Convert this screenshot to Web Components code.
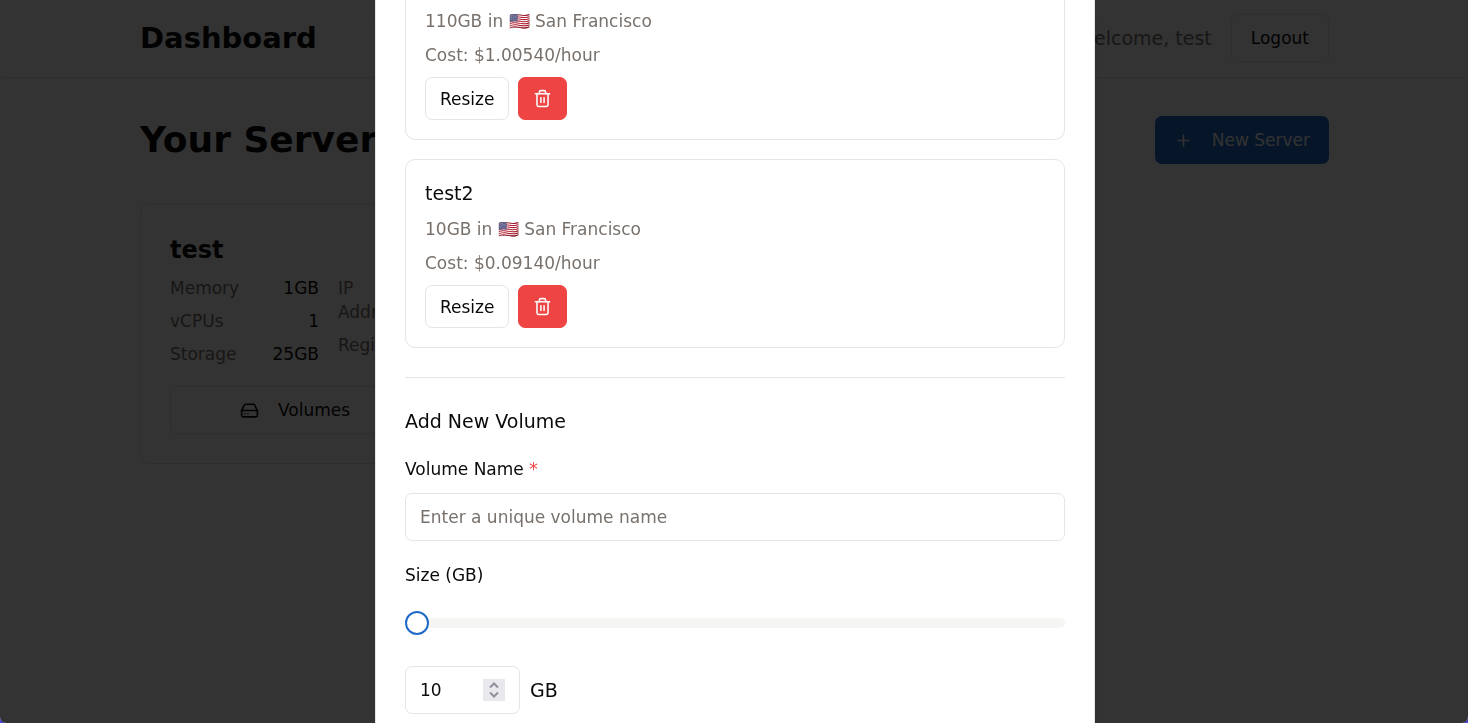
<!DOCTYPE html>
<html lang="en">
<head>
<meta charset="utf-8">
<meta name="viewport" content="width=device-width, initial-scale=1">
<title>Dashboard</title>
<style>
  html { height: 100%; background: #4a3fd0; }
  body {
    --ink: #0a0a0a; --muted: #78716c; --line: #e5e5e5; --primary: #1f6ac7; --danger: #ef4444;
    margin: 0; height: 100%; overflow: hidden;
    font: 17px/24px "DejaVu Sans", sans-serif; color: var(--ink);
  }
</style>
</head>
<body>
<dashboard-app></dashboard-app>

<script>
const define = (name, html, setup) => {
  const template = document.createElement('template');
  template.innerHTML = '<style>*{box-sizing:border-box}[hidden]{display:none}</style>' + html;
  customElements.define(name, class extends HTMLElement {
    constructor() {
      super();
      this.attachShadow({ mode: 'open' }).append(template.content.cloneNode(true));
    }
    connectedCallback() { if (setup) setup(this, this.shadowRoot); }
  });
};

const ICONS = {
  plus: '<path d="M5 12h14M12 5v14"/>',
  trash: '<path d="M3 6h18"/><path d="M19 6v14c0 1-1 2-2 2H7c-1 0-2-1-2-2V6"/><path d="M8 6V4c0-1 1-2 2-2h4c1 0 2 1 2 2v2"/><path d="M10 11v6M14 11v6"/>',
  drive: '<path d="M22 12H2"/><path d="M5.45 5.11 2 12v6a2 2 0 0 0 2 2h16a2 2 0 0 0 2-2v-6l-3.45-6.89A2 2 0 0 0 16.76 4H7.24a2 2 0 0 0-1.79 1.11z"/><path d="M6 16h.01M10 16h.01"/>'
};

define('ui-icon', `
  <style>
    :host { display: block; width: 19px; height: 19px; flex: none; }
    svg { display: block; width: 100%; height: 100%; }
  </style>
  <svg viewBox="0 0 24 24" fill="none" stroke="currentColor" stroke-width="2" stroke-linecap="round" stroke-linejoin="round" aria-hidden="true"></svg>`,
  (host, root) => { root.querySelector('svg').innerHTML = ICONS[host.getAttribute('name')]; });

define('ui-button', `
  <style>
    :host { display: block; }
    button {
      display: flex; align-items: center; justify-content: center; gap: 19px;
      width: 100%; height: 48px; padding: 0 19px; margin: 0;
      border: 1px solid var(--line); border-radius: 7px; background: #fff;
      color: inherit; font: inherit; white-space: nowrap; cursor: pointer;
    }
    :host([size=small]) button { height: 43px; padding: 0 14px; }
    :host([variant=primary]) button { background: var(--primary); border: 0; color: #fafaf9; }
    :host([variant=danger]) button { background: var(--danger); border-color: var(--danger); color: #fafaf9; }
  </style>
  <button type="button"><slot></slot></button>`,
  (host, root) => {
    const label = host.getAttribute('label');
    if (label) root.querySelector('button').setAttribute('aria-label', label);
  });

define('app-header', `
  <style>
    :host { display: block; border-bottom: 1px solid var(--line); }
    .bar { display: flex; align-items: center; justify-content: space-between; max-width: 1189px; margin: 0 auto; padding: 14px 0 15px; }
    h1 { margin: 0; font-size: 29px; line-height: 34px; }
    .user { display: flex; align-items: center; gap: 19px; }
    .welcome { font-size: 19px; color: var(--muted); }
  </style>
  <header class="bar">
    <h1>Dashboard</h1>
    <div class="user"><span class="welcome">Welcome, test</span><ui-button>Logout</ui-button></div>
  </header>`);

define('server-card', `
  <style>
    :host { display: block; border: 1px solid var(--line); border-radius: 10px; padding: 29px; }
    h3 { margin: 0 0 9px; font-size: 24px; line-height: 34px; }
    .specs { display: grid; grid-template-columns: 1fr 1fr; gap: 19px; margin-bottom: 20px; }
    dl { margin: 0; display: flex; flex-direction: column; gap: 9px; }
    dl div { display: flex; justify-content: space-between; }
    dt { color: var(--muted); }
    .network dt { width: 80px; }
    dd { margin: 0; }
    .actions { display: grid; grid-template-columns: 1fr 48px; gap: 19px; }
  </style>
  <h3>test</h3>
  <div class="specs">
    <dl>
      <div><dt>Memory</dt><dd>1GB</dd></div>
      <div><dt>vCPUs</dt><dd>1</dd></div>
      <div><dt>Storage</dt><dd>25GB</dd></div>
    </dl>
    <dl class="network">
      <div><dt>IP Address</dt><dd></dd></div>
      <div><dt>Region</dt><dd></dd></div>
    </dl>
  </div>
  <div class="actions">
    <ui-button><ui-icon name="drive"></ui-icon>Volumes</ui-button>
    <ui-button variant="danger" size="icon" label="Delete server"></ui-button>
  </div>`);

define('server-list', `
  <style>
    :host { display: block; max-width: 1189px; margin: 0 auto; padding: 38px 0; }
    .title { display: flex; align-items: center; justify-content: space-between; margin-bottom: 39px; }
    h2 { margin: 0; font-size: 36px; line-height: 48px; }
    .grid { display: grid; grid-template-columns: repeat(3, 1fr); gap: 29px; }
  </style>
  <div class="title">
    <h2>Your Servers</h2>
    <ui-button variant="primary"><ui-icon name="plus"></ui-icon>New Server</ui-button>
  </div>
  <div class="grid"><server-card></server-card></div>`);

define('volume-card', `
  <style>
    :host { display: flex; flex-direction: column; gap: 10px; border: 1px solid var(--line); border-radius: 10px; padding: 19px; }
    :host([continued]) { border-top: 0; border-radius: 0 0 10px 10px; padding-top: 9px; }
    h3 { margin: 0; font-size: 19px; line-height: 28px; font-weight: 400; }
    p { margin: 0; color: var(--muted); }
    .actions { display: flex; gap: 9px; }
  </style>
  <h3></h3>
  <p><slot></slot></p>
  <p class="cost"></p>
  <div class="actions">
    <ui-button size="small">Resize</ui-button>
    <ui-button size="small" variant="danger" label="Delete volume"><ui-icon name="trash"></ui-icon></ui-button>
  </div>`,
  (host, root) => {
    const title = root.querySelector('h3');
    title.textContent = host.getAttribute('name') || '';
    title.hidden = !host.hasAttribute('name');
    root.querySelector('.cost').textContent = 'Cost: ' + host.getAttribute('cost');
  });

define('volume-form', `
  <style>
    :host { display: block; }
    form { display: flex; flex-direction: column; gap: 22px; }
    h2 { margin: 0; font-size: 19px; line-height: 28px; font-weight: 400; }
    .field { display: flex; flex-direction: column; gap: 12px; }
    .required { color: var(--danger); }
    input { font: inherit; color: inherit; margin: 0; }
    .text { width: 100%; height: 48px; padding: 0 14px; border: 1px solid var(--line); border-radius: 7px; background: #fff; }
    .text::placeholder { color: var(--muted); opacity: 1; }
    .range { appearance: none; -webkit-appearance: none; width: 100%; height: 24px; margin: 12px 0; background: none; }
    .range::-webkit-slider-runnable-track { height: 10px; border-radius: 5px; background: #f5f5f4; }
    .range::-webkit-slider-thumb { -webkit-appearance: none; width: 24px; height: 24px; margin-top: -7px; border: 2px solid var(--primary); border-radius: 50%; background: #fff; }
    .amount { display: flex; align-items: center; gap: 10px; margin-top: 7px; font-size: 19px; }
    .number { display: flex; align-items: center; justify-content: space-between; width: 115px; height: 48px; padding: 0 14px; border: 1px solid var(--line); border-radius: 7px; font-size: 17px; }
    .number input { width: 50px; height: 24px; padding: 0; border: 0; outline: 0; background: none; appearance: textfield; -moz-appearance: textfield; }
    .number input::-webkit-inner-spin-button { -webkit-appearance: none; margin: 0; }
    .number svg { width: 22px; height: 22px; background: #e9e8ed; }
  </style>
  <form>
    <h2>Add New Volume</h2>
    <div class="field">
      <label for="name">Volume Name <span class="required">*</span></label>
      <input class="text" id="name" type="text" placeholder="Enter a unique volume name">
    </div>
    <div class="field">
      <label for="size">Size (GB)</label>
      <input class="range" id="size" type="range" min="10" max="1000" value="10">
      <div class="amount">
        <span class="number">
          <input type="number" value="10" min="10" aria-label="Size in gigabytes">
          <svg viewBox="0 0 22 22" fill="none" stroke="#8f8f9d" stroke-width="2" aria-hidden="true"><path d="M7 8.5l4-4 4 4M7 13.5l4 4 4-4"/></svg>
        </span>
        <span>GB</span>
      </div>
    </div>
  </form>`);

define('volume-dialog', `
  <style>
    :host { position: fixed; inset: 0; display: flex; justify-content: center; background: rgba(0, 0, 0, .8); border-radius: 0 0 6px 6px; padding-left: 2px; overflow: hidden; }
    dialog { position: static; width: 720px; max-width: 100%; max-height: none; height: auto; margin: 0; padding: 0 29px; border: solid var(--line); border-width: 0 1px; background: #fff; color: inherit; box-shadow: 0 10px 15px -3px rgba(0, 0, 0, .1); }
    .volumes { display: flex; flex-direction: column; gap: 19px; }
    hr { height: 1px; margin: 29px 0; border: 0; background: var(--line); }
  </style>
  <dialog open aria-label="Volumes">
    <div class="volumes"><slot></slot></div>
    <hr>
    <volume-form></volume-form>
  </dialog>`);

define('dashboard-app', `
  <style>
    :host { display: block; height: 100%; overflow: hidden; background: #fff; border-radius: 0 0 6px 6px; padding-left: 1px; box-sizing: border-box; }
  </style>
  <app-header></app-header>
  <main><server-list></server-list></main>
  <volume-dialog>
    <volume-card continued cost="$1.00540/hour">110GB in 🇺🇸 San Francisco</volume-card>
    <volume-card name="test2" cost="$0.09140/hour">10GB in 🇺🇸 San Francisco</volume-card>
  </volume-dialog>`);
</script>
</body>
</html>
